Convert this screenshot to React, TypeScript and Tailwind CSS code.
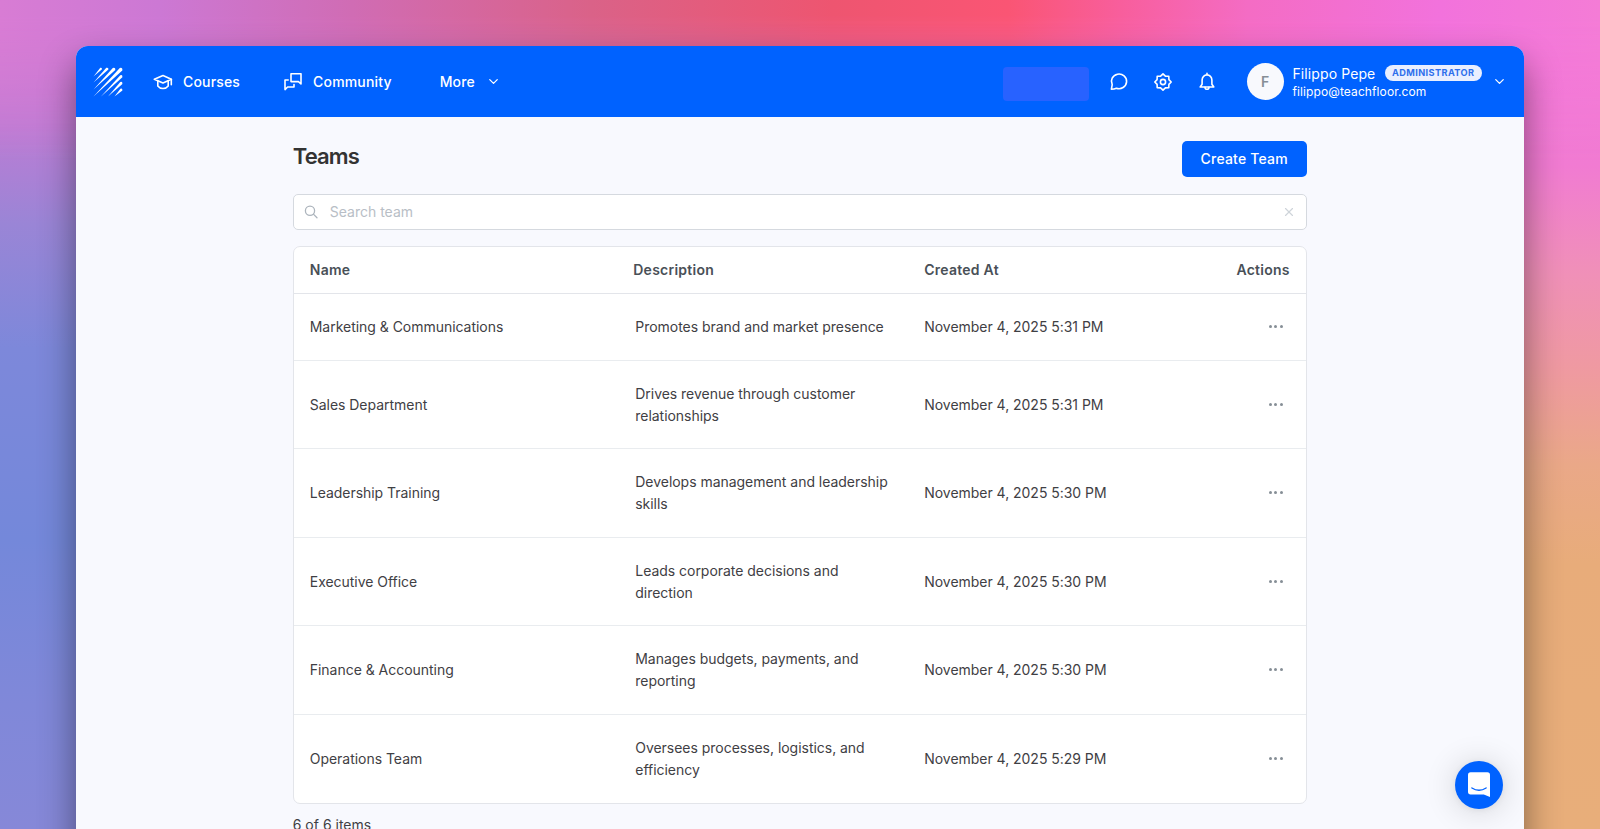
import { ChevronDown, X } from 'lucide-react';

const teams = [
  { name: 'Marketing & Communications', description: 'Promotes brand and market presence', createdAt: 'November 4, 2025 5:31 PM' },
  { name: 'Sales Department', description: 'Drives revenue through customer relationships', createdAt: 'November 4, 2025 5:31 PM' },
  { name: 'Leadership Training', description: 'Develops management and leadership skills', createdAt: 'November 4, 2025 5:30 PM' },
  { name: 'Executive Office', description: 'Leads corporate decisions and direction', createdAt: 'November 4, 2025 5:30 PM' },
  { name: 'Finance & Accounting', description: 'Manages budgets, payments, and reporting', createdAt: 'November 4, 2025 5:30 PM' },
  { name: 'Operations Team', description: 'Oversees processes, logistics, and efficiency', createdAt: 'November 4, 2025 5:29 PM' },
];

function Logo() {
  return (
    <svg className="mt-px ml-[17px] h-[30px] w-[30px]" viewBox="0 0 30 30" fill="white">
      <path d="M0.5 9.5 L7.3 0.8 Q9.2 0.2 9 2.2 Z" />
      <path d="M0.5 15.5 L13.3 0.8 Q15.8 0.2 15.4 2.5 Z" />
      <path d="M0.5 22.5 L19.8 0.9 Q22.6 0 22.3 3.1 Z" />
      <path d="M0.5 29.5 L26.8 0.9 Q29.8 0 29.3 3.5 Z" />
      <path d="M8 29.5 L27.3 8.3 Q29.6 7.3 29.4 10.3 Z" />
      <path d="M15 29.5 L27.3 15 Q29.6 14 29.4 17 Z" />
      <path d="M21.5 29.5 L27.4 21.8 Q29.5 20.8 29.4 23.4 Z" />
    </svg>
  );
}

function CoursesIcon() {
  return (
    <svg className="h-5 w-5" viewBox="0 0 20 20" fill="none" stroke="white" strokeWidth="1.6" strokeLinecap="round" strokeLinejoin="round">
      <path d="M1.3 7.3 10 3.6 18.3 7.3 10 11Z" />
      <path d="M4.8 8.9v5q2 2.6 5.2 2.6t5.2-2.6v-5" />
      <path d="M18.3 7.3v5.4" />
    </svg>
  );
}

function CommunityIcon() {
  return (
    <svg className="h-5 w-5" viewBox="0 0 20 20" fill="none" stroke="white" strokeWidth="1.6" strokeLinecap="round" strokeLinejoin="round">
      <path d="M8 1.8h10v10.2l-2.6-2.4H8Z" />
      <path d="M5.2 8H2v9.6l2.6-2.6H11v-2.4" />
    </svg>
  );
}

function Navbar() {
  return (
    <header className="flex h-[70.5px] shrink-0 items-center bg-[#0062ff] text-white">
      <Logo />
      <nav className="mt-px flex items-center text-sm font-medium tracking-[0.17px]">
        <a href="#" className="ml-[30px] flex items-center gap-[10px]">
          <CoursesIcon />
          Courses
        </a>
        <a href="#" className="ml-[43px] flex items-center gap-[10px]">
          <CommunityIcon />
          Community
        </a>
        <a href="#" className="ml-[48px] flex items-center gap-[11px]">
          More
          <ChevronDown className="h-[15px] w-[15px]" />
        </a>
      </nav>

      <div className="mt-px ml-auto flex items-center">
        <div className="mt-[5px] h-[34px] w-[86px] rounded-[4px] bg-[#2862ff]" />
        <svg className="ml-[20px] h-5 w-5" viewBox="0 0 20 20" fill="none" stroke="white" strokeWidth="1.6" strokeLinecap="round" strokeLinejoin="round">
          <path d="M2.4 17.2 3.2 12.6A7.6 7.3 0 1 1 7.4 16.2Q5.2 17.2 2.4 17.2Z" />
        </svg>
        <svg className="ml-6 h-5 w-5" viewBox="0 0 20 20" fill="none" stroke="white" strokeWidth="1.6" strokeLinejoin="round">
          <path d="M10 1.8 12.4 4.1 15.8 4.2 15.9 7.6 18.2 10 15.9 12.4 15.8 15.8 12.4 15.9 10 18.2 7.6 15.9 4.2 15.8 4.1 12.4 1.8 10 4.1 7.6 4.2 4.2 7.6 4.1Z" />
          <circle cx="10" cy="10" r="2.6" />
        </svg>
        <svg className="ml-6 h-5 w-5" viewBox="0 0 20 20" fill="none" stroke="white" strokeWidth="1.6" strokeLinecap="round" strokeLinejoin="round">
          <path d="M10 1.2V2.6M3.2 15H16.8L14.9 12.2V8a4.9 5.1 0 0 0-9.8 0v4.2Z" />
          <path d="M8 15.3a2 2 0 0 0 4 0" />
        </svg>

        <div className="ml-[30px] flex h-[37px] w-[37px] items-center justify-center rounded-full bg-[#f8f9fd] text-sm font-semibold text-[#868e96]">
          F
        </div>
        <div className="ml-[9px] w-[189px] whitespace-nowrap">
          <div className="flex items-center justify-between">
            <span className="text-sm leading-[19px] tracking-[0.1px]">Filippo Pepe</span>
            <span className="flex h-4 items-center rounded-full bg-[#e9efff] px-[7px] text-[9.2px] font-bold tracking-[0.4px] text-[#2f6fec]">
              ADMINISTRATOR
            </span>
          </div>
          <div className="text-[12px] leading-[17px] tracking-[0.1px]">filippo@teachfloor.com</div>
        </div>
        <ChevronDown className="mr-[17px] ml-[10px] h-[15px] w-[15px]" />
      </div>
    </header>
  );
}

function TeamsTable() {
  return (
    <div className="mt-[16px] overflow-hidden rounded-[7px] border border-[#e3e5ea] bg-white text-[14px] tracking-[-0.03px] text-[#3f4044]">
      <div className="flex h-[47px] items-center border-b border-[#e3e5ea] font-semibold tracking-[0.25px] text-[#495057]">
        <div className="w-[339.5px] pl-4">Name</div>
        <div className="w-[291px]">Description</div>
        <div className="w-[280px]">Created At</div>
        <div className="ml-auto pr-4">Actions</div>
      </div>
      {teams.map((team, index) => (
        <div
          key={team.name}
          className={`flex items-center border-b border-[#e9ecef] last:h-[88px] last:border-b-0 ${index === 0 ? 'h-[67px]' : 'h-[88.5px]'}`}
        >
          <div className="w-[339.5px] pl-4">{team.name}</div>
          <div className="w-[291px] pt-px pr-[30px] pl-[2px] leading-[22px]">{team.description}</div>
          <div className="w-[280px]">{team.createdAt}</div>
          <button className="mr-[23px] ml-auto flex gap-[2.5px]" aria-label="Team actions">
            <span className="h-[3px] w-[3px] rounded-full bg-[#868e96]" />
            <span className="h-[3px] w-[3px] rounded-full bg-[#868e96]" />
            <span className="h-[3px] w-[3px] rounded-full bg-[#868e96]" />
          </button>
        </div>
      ))}
    </div>
  );
}

function ChatLauncher() {
  return (
    <button
      aria-label="Open chat"
      className="absolute top-[714.5px] right-[20.5px] flex h-12 w-12 items-center justify-center rounded-full bg-[#0062ff] shadow-[0_1px_6px_rgba(0,0,0,0.06),0_2px_32px_rgba(0,0,0,0.16)]"
    >
      <svg className="h-[25px] w-[22px]" viewBox="0 0 22 25">
        <path fill="white" d="M2.6 0.3H19.4Q22 0.3 22 2.9V25L15.8 22.4H2.6Q0 22.4 0 19.8V2.9Q0 0.3 2.6 0.3Z" />
        <path d="M3.9 16Q11 20.6 18.1 16" fill="none" stroke="#0062ff" strokeWidth="1.4" strokeLinecap="round" />
      </svg>
    </button>
  );
}

export default function App() {
  return (
    <div className="relative h-[829px] overflow-hidden bg-[linear-gradient(to_bottom,#d87ad4,#bd7cd4_15%,#9a85d6_27%,#7d88da_42%,#7488da_65%,#8088d9_85%,#8688d8),linear-gradient(to_bottom,#f478dc,#f17bd2_20%,#f090b8_33%,#ef9aa0_45%,#eaa888_56%,#e8ac7a_68%,#e8ae7a)] bg-[length:50%_100%] bg-[position:left,right] bg-no-repeat font-['Inter',sans-serif]">
      <div className="absolute inset-x-0 top-0 h-[160px] bg-[linear-gradient(to_right,#d87cd4,#cc78d4_10%,#d06cb4_22%,#da6288_37%,#ee5570_52%,#fa5574_63%,#f85e9c_70%,#f46cc4_78%,#f272dc_90%,#f47cd6)] [mask-image:linear-gradient(to_bottom,black_10%,transparent)]" />
      <div className="relative mt-[46px] mr-[76.5px] ml-[76px] flex h-[900px] flex-col overflow-hidden rounded-t-[12px] bg-[#f8f9fe] shadow-[0_18px_36px_rgba(0,0,0,0.45)]">
        <Navbar />
        <main className="mx-auto w-[1014px] pt-[24px]">
          <div className="flex h-[37px] items-start justify-between">
            <h1 className="text-[22px] leading-[30px] font-semibold tracking-[-0.85px] text-[#333]">Teams</h1>
            <button className="h-[36px] w-[125px] rounded-[5px] bg-[#0062ff] text-sm font-medium tracking-[0.2px] text-white">
              Create Team
            </button>
          </div>
          <div className="mt-[16px] flex h-[36px] items-center rounded-[5px] border border-[#d5d9df] bg-white px-[10px]">
            <svg className="h-[14px] w-[14px]" viewBox="0 0 14 14" fill="none" stroke="#adb5bd" strokeWidth="1.3" strokeLinecap="round">
              <circle cx="6" cy="5.7" r="4.6" />
              <path d="M9.4 9.1 13 12.7" />
            </svg>
            <input placeholder="Search team" className="ml-[12px] flex-1 text-sm outline-none placeholder:text-[#b8bec6]" />
            <X className="h-[14px] w-[14px] text-[#ced4da]" />
          </div>
          <TeamsTable />
          <p className="mt-[11px] text-sm text-[#3f4044]">6 of 6 items</p>
        </main>
        <ChatLauncher />
      </div>
    </div>
  );
}
